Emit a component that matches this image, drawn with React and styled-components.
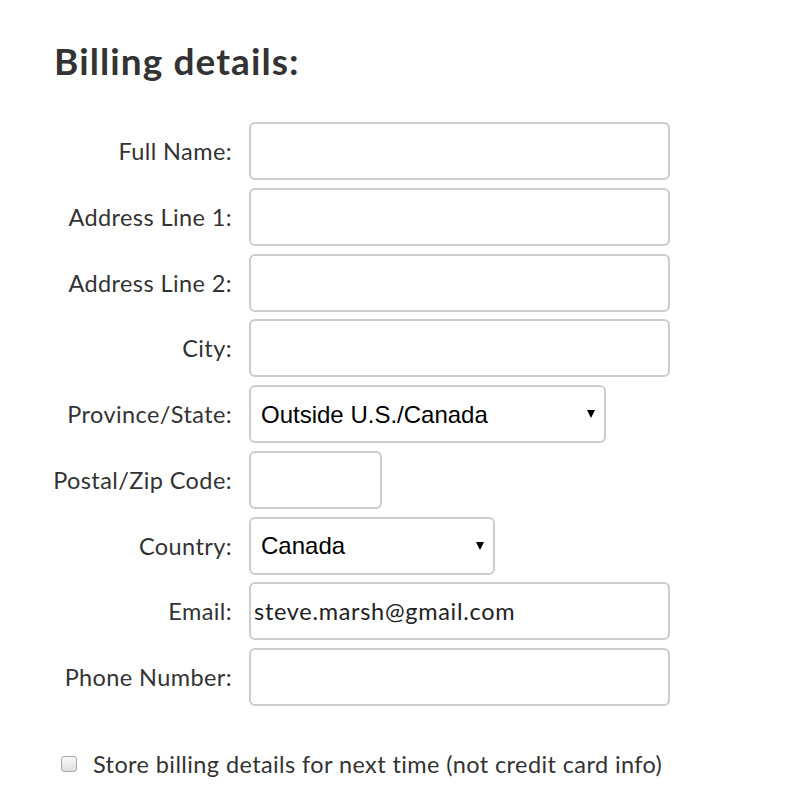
import styled, { createGlobalStyle } from "styled-components";

const GlobalStyle = createGlobalStyle`
  body {
    margin: 0;
    background: #fff;
    font-family: Lato, "Open Sans", sans-serif;
    color: #333;
  }
`;

const Page = styled.div`
  padding: 38px 0 0 50px;
  width: 804px;
  height: 812px;
  box-sizing: border-box;
`;

const Title = styled.h2`
  margin: 0 0 38px 4px;
  font-size: 37px;
  font-weight: 700;
  line-height: 46px;
  color: #333;
  letter-spacing: 1.1px;
`;

const Form = styled.div`
  display: grid;
  grid-template-columns: 183px auto;
  column-gap: 16px;
  row-gap: 7.75px;
  align-items: center;
  justify-items: start;
`;

const Label = styled.label`
  justify-self: end;
  white-space: nowrap;
  font-size: 23.5px;
  color: #333;
  letter-spacing: 0.4px;
  margin-right: 1px;
`;

const Field = styled.input`
  box-sizing: border-box;
  width: ${(p) => p.$w}px;
  height: 58px;
  border: 2px solid #ccc;
  border-radius: 6px;
  padding: 0 3px;
  font-family: Lato, "Open Sans", sans-serif;
  font-size: 23.5px;
  letter-spacing: 0.7px;
  color: #222;
  background: #fff;
  outline: none;
`;

const SelectWrap = styled.div`
  position: relative;
  width: ${(p) => p.$w}px;

  &::after {
    content: "";
    position: absolute;
    right: 11px;
    top: 25px;
    border-left: 4.5px solid transparent;
    border-right: 4.5px solid transparent;
    border-top: 8px solid #000;
    pointer-events: none;
  }
`;

const Select = styled.select`
  box-sizing: border-box;
  appearance: none;
  width: 100%;
  height: 58px;
  border: 2px solid #ccc;
  border-radius: 6px;
  padding: 0 10px;
  font-family: "Liberation Sans", Arial, sans-serif;
  font-size: 24px;
  color: #000;
  background: #fff;
  outline: none;
`;

const CheckRow = styled.label`
  display: flex;
  align-items: center;
  gap: 16px;
  margin: 44px 0 0 11px;
  font-size: 23.5px;
  color: #333;
  letter-spacing: 0.4px;
`;

const Box = styled.input`
  appearance: none;
  margin: 0;
  width: 16px;
  height: 16px;
  border: 1px solid #a9a9a9;
  border-radius: 3px;
  background: linear-gradient(#fafafa, #dedede);
`;

export default function App() {
  return (
    <>
      <GlobalStyle />
      <Page>
        <Title>Billing details:</Title>
        <Form>
          <Label>Full Name:</Label>
          <Field $w={421} />
          <Label>Address Line 1:</Label>
          <Field $w={421} />
          <Label>Address Line 2:</Label>
          <Field $w={421} />
          <Label>City:</Label>
          <Field $w={421} />
          <Label>Province/State:</Label>
          <SelectWrap $w={357}>
            <Select defaultValue="out">
              <option value="out">Outside U.S./Canada</option>
            </Select>
          </SelectWrap>
          <Label>Postal/Zip Code:</Label>
          <Field $w={133} />
          <Label>Country:</Label>
          <SelectWrap $w={246}>
            <Select defaultValue="ca">
              <option value="ca">Canada</option>
            </Select>
          </SelectWrap>
          <Label>Email:</Label>
          <Field $w={421} defaultValue="steve.marsh@gmail.com" />
          <Label>Phone Number:</Label>
          <Field $w={421} />
        </Form>
        <CheckRow>
          <Box type="checkbox" />
          Store billing details for next time (not credit card info)
        </CheckRow>
      </Page>
    </>
  );
}
